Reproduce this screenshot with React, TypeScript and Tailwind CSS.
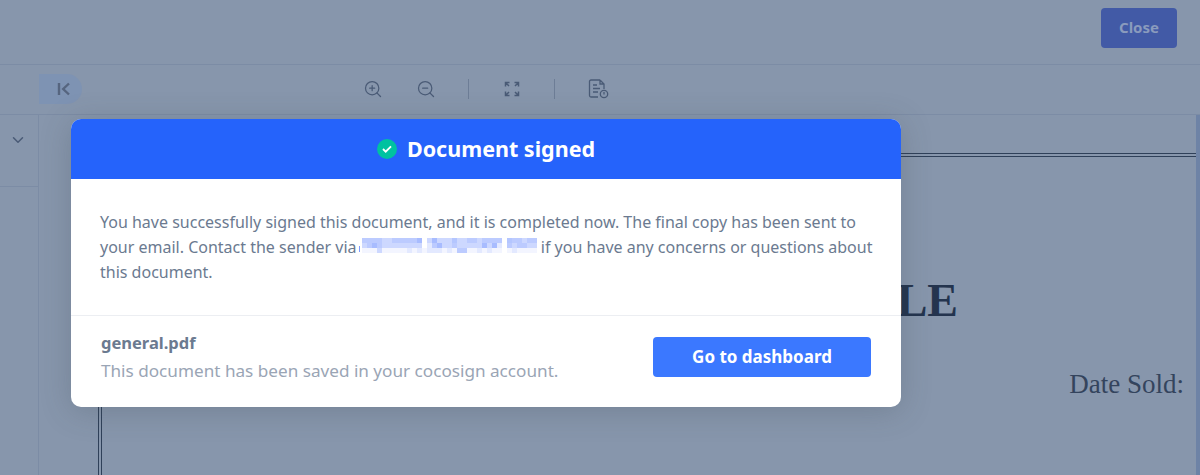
import React from 'react';
import { ChevronDown, ZoomIn, ZoomOut } from 'lucide-react';

const blurColors: Record<string, string> = {
  A: '#b4c6ff',
  B: '#bccbff',
  C: '#cdd8ff',
  D: '#a8bcff',
  L: '#e3e9ff',
  F: '#f3f5ff',
  W: '#ffffff',
};

const blurRows = [
  'BBBBCCBBBBBDWCDCCCACCBBCBBBBWABBCBB',
  'CBDBCCCCCCCCWLBDCCBCCCCCDCDLWBCBBCC',
  'FFFCFFFFFLFLFLLLFLFBBFFLFLFFWFLFFFF',
];

const PixelBlur = () => (
  <svg width="178" height="16" viewBox="0 0 178 16" className="inline-block align-[-1px] -ml-[2px]">
    <rect x="0" y="8" width="1" height="6" fill="#7f9cff" />
    {blurRows.map((row, r) =>
      row.split('').map((key, c) => (
        <rect key={`${r}-${c}`} x={3 + c * 5} y={r * 5} width="5" height="5" fill={blurColors[key]} />
      ))
    )}
  </svg>
);

const FitIcon = () => (
  <svg width="16" height="16" viewBox="0 0 16 16" fill="none" stroke="#4a5b76" strokeWidth="1.500">
    <path d="M1.500 5.500V1.500H5.500M2 2l3 3M10.500 1.500H14.500V5.500M14 2l-3 3M1.500 10.500V14.500H5.500M2 14l3-3M10.500 14.500H14.500V10.500M14 14l-3-3" />
  </svg>
);

const DocClockIcon = () => (
  <svg width="22" height="20" viewBox="0 0 22 20" fill="none" stroke="#4a5b76" strokeWidth="1.300">
    <path d="M12 1H3a1.500 1.500 0 0 0-1.500 1.500v14A1.500 1.500 0 0 0 3 18h7M12 1l4 4v5M12 1v4h4M5 6h4M5 9.500h7M5 13h5" />
    <circle cx="16" cy="15" r="3.700" />
    <path d="M16 13v2.500" />
  </svg>
);

export default function App() {
  return (
    <div className="relative w-[1200px] h-[475px] overflow-hidden bg-[#8796ac] font-['Noto_Sans',sans-serif]">
      <header className="h-[65px] border-b border-[#7c8ca5] flex justify-end items-start pt-2 pr-[23px]">
        <button className="w-[76px] h-10 pb-[2px] rounded bg-[#425aa6] text-[#8a9bbd] text-[15px] font-bold">Close</button>
      </header>

      <div className="h-[50px] border-b border-[#7c8ca5] relative flex items-center">
        <div className="ml-[39px] w-[43px] h-[30px] -mt-[2px] rounded-r-full bg-[#7e93b3] flex items-center justify-center">
          <svg width="14" height="14" viewBox="0 0 14 14" fill="none" stroke="#56657f" strokeWidth="2.400" className="ml-[7px]">
            <path d="M2 1v12M12 1.500 6.200 7l5.800 5.500" />
          </svg>
        </div>
        <div className="ml-[281px] flex items-center -mt-[2px] text-[#4a5b76]">
          <ZoomIn size={20} strokeWidth={1.5} />
          <ZoomOut size={20} strokeWidth={1.5} className="ml-[33px]" />
          <div className="ml-[32px] h-5 w-px bg-[#6d7d96]" />
          <div className="ml-[35px]"><FitIcon /></div>
          <div className="ml-[34px] h-5 w-px bg-[#6d7d96]" />
          <div className="ml-[33px]"><DocClockIcon /></div>
        </div>
      </div>

      <div className="flex h-[360px]">
        <aside className="w-[39px] border-r border-[#7c8ca5] shrink-0">
          <div className="h-[72px] border-b border-[#7c8ca5] pt-[16px] pl-[9px] text-[#4a5b76]">
            <ChevronDown size={18} strokeWidth={2} />
          </div>
        </aside>
        <main className="flex-1 pl-[59px] pt-[38px]">
          <div className="h-[400px] border-l-[4px] border-t-[4px] border-double border-[#2f4059] font-['Liberation_Serif',serif] text-[#24344e] relative">
            <h1 className="pt-[114px] pr-[238px] text-right text-[46px] leading-[60px] font-bold">SALE</h1>
            <p className="pt-[37px] pr-[12px] text-right text-[27px] leading-[32px] text-[#34445d]">Date Sold:</p>
          </div>
        </main>
        <div className="w-1 bg-[#6e83a6] shrink-0" />
      </div>

      <div className="absolute left-[71px] top-[119px] w-[830px] h-[288px] rounded-[10px] overflow-hidden bg-white shadow-[0_4px_30px_rgba(60,70,80,0.25)]">
        <div className="h-[60px] bg-[#2563fb] flex items-center justify-center gap-[10px] text-white">
          <span className="w-5 h-5 rounded-full bg-[#00c2a0] flex items-center justify-center">
            <svg width="10" height="8" viewBox="0 0 10 8" fill="none" stroke="#fff" strokeWidth="1.800">
              <path d="M1 4l2.700 2.700L9 1.300" />
            </svg>
          </span>
          <span className="text-[21.500px] font-bold leading-none">Document signed</span>
        </div>
        <div className="h-[137px] border-b border-[#eceef2] pl-[29px] pr-[28px] pt-[31px] text-[16px] leading-[25px] text-[#6b7a90]">
          <p>
            You have successfully signed this document, and it is completed now. The final copy has been sent to your email. Contact the sender via <PixelBlur /> if you have any concerns or questions about this document.
          </p>
        </div>
        <div className="flex items-center justify-between pl-[30px] pr-[30px] pt-[12px]">
          <div>
            <div className="text-[16.500px] leading-[30px] font-bold text-[#6b7a90]">general.pdf</div>
            <div className="text-[17.150px] leading-[26px] text-[#9aa5b5]">This document has been saved in your cocosign account.</div>
          </div>
          <button className="w-[218px] h-10 mt-[2px] rounded bg-[#3b78ff] text-white text-[17px] font-bold">Go to dashboard</button>
        </div>
      </div>
    </div>
  );
}
